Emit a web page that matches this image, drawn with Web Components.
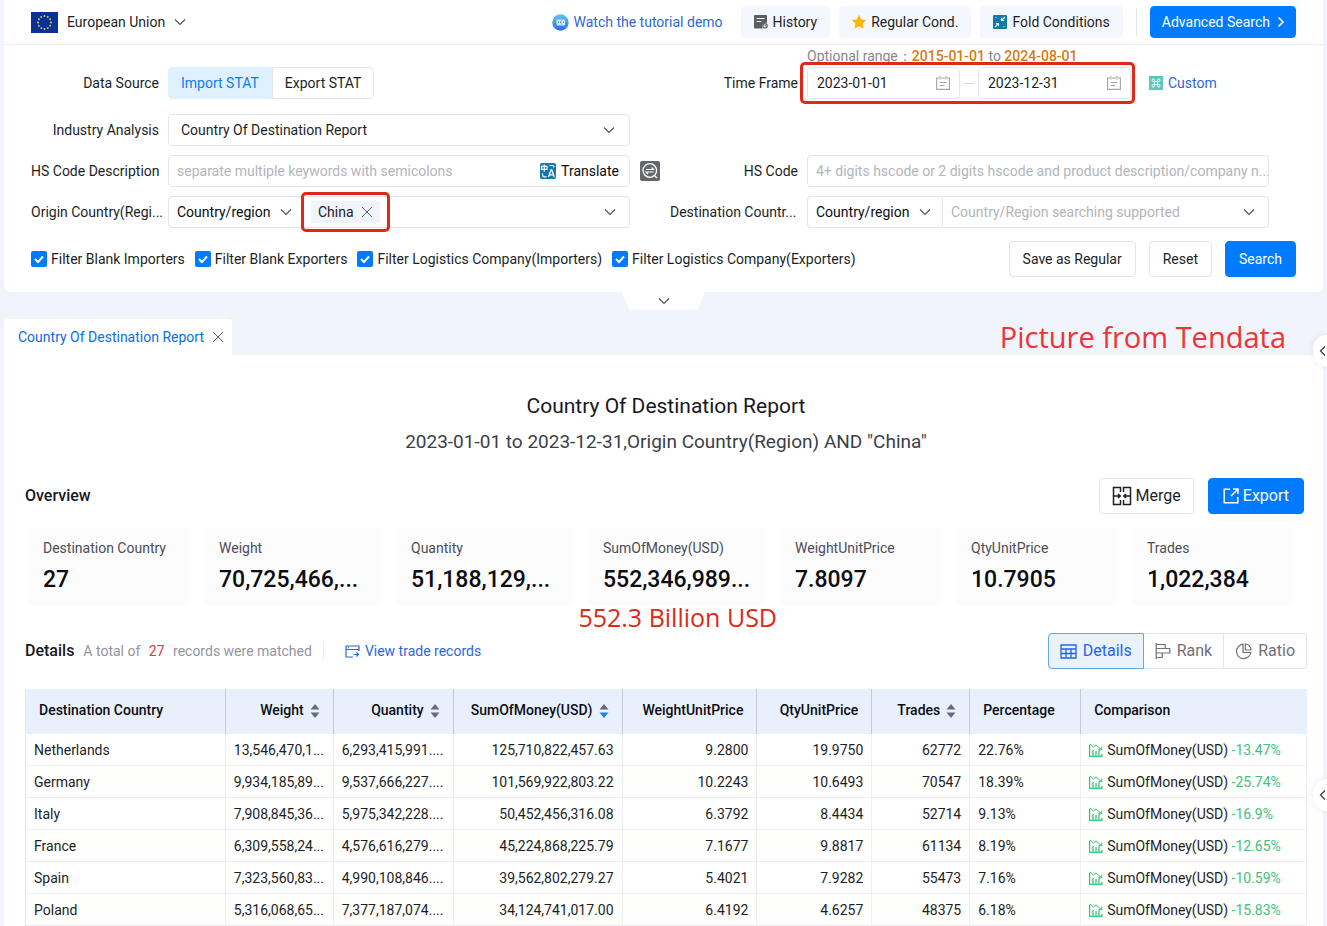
<!DOCTYPE html>
<html lang="en">
<head>
<meta charset="utf-8">
<meta name="viewport" content="width=device-width, initial-scale=1">
<title>Country Of Destination Report</title>
<style>
body{
    margin: 0;
    background-color: #f1f4fb;
    color: #1c1f26;
    font-family: Roboto, "Liberation Sans", sans-serif;
    font-size: 14px;
    line-height: 20px;
    --blue: #007bff;
    --link: #2f67d8;
    --line: #e4e5e8;
    --mark: #dc2a14;
}
</style>
</head>
<body>

<trade-page></trade-page>

<script>
function makeTemplate(html) {
    const template = document.createElement("template");
    template.innerHTML = html;
    return template;
}

class BaseElement extends HTMLElement {
    constructor() {
        super();
        this.attachShadow({mode:"open"});
    }
    show(html) {
        this.shadowRoot.appendChild(makeTemplate(html).content.cloneNode(true));
    }
}

/* icons */
const stars = Array.from({length: 12}, (v, i) => {
    const a = i * Math.PI / 6;
    return `<circle cx="${(13.5 + 6.5 * Math.sin(a)).toFixed(1)}" cy="${(10.5 - 6.5 * Math.cos(a)).toFixed(1)}" r="0.9"/>`;
}).join("");

const icons = {
    flag: [27, 21, `<rect width="27" height="21" fill="#0a3296"/><g fill="#e8d94a">${stars}</g>`],
    down: [12, 12, `<path d="M1 3.5l5 5 5-5" fill="none" stroke="#4d4f55" stroke-width="1.1"/>`],
    left: [8, 12, `<path d="M6 1.5L1.5 6 6 10.5" fill="none" stroke="#3c3e44" stroke-width="1.3"/>`],
    right: [8, 12, `<path d="M1.5 1.5L6 6l-4.500 4.500" fill="none" stroke="#fff" stroke-width="1.600"/>`],
    close: [12, 12, `<path d="M1 1l10 10M11 1L1 11" fill="none" stroke="#5b5e66" stroke-width="1"/>`],
    robot: [17, 17, `<defs><linearGradient id="g" x2="0" y2="1"><stop offset="0" stop-color="#5cc8f6"/><stop offset="1" stop-color="#2b6cf0"/></linearGradient></defs><circle cx="8.5" cy="8.5" r="8.2" fill="url(#g)"/><path d="M4.500 5.500h5v6h-3.500a1.500 1.500 0 0 1-1.500-1.500z" fill="#d5efff"/><path d="M10.200 5.500h1.300a1.500 1.500 0 0 1 1.500 1.500v3a1.500 1.500 0 0 1-1.500 1.500h-1.300z" fill="#fff"/><path d="M6.500 7.500v1.500M8.500 7.500v1.500M11.500 7.500v1.500" stroke="#2f8df0"/>`],
    history: [14, 14, `<path d="M1 0h11a1 1 0 0 1 1 1v7a3.500 3.500 0 0 0-4 5.500H1a1 1 0 0 1-1-1V1a1 1 0 0 1 1-1z" fill="#5c5d62"/><path d="M2.500 3.500h8M2.500 6.500h5" stroke="#fff"/><circle cx="11" cy="10.800" r="2.200" fill="none" stroke="#5c5d62" stroke-width="1.200"/><path d="M11 9.500v1.500h1.300" fill="none" stroke="#5c5d62" stroke-width=".7"/>`],
    star: [14, 14, `<path d="M7 .5l2 4.300 4.700.5-3.500 3.200 1 4.700L7 10.900l-4.200 2.300 1-4.700L.3 5.300l4.700-.5z" fill="#ffb400" stroke="#ffb400" stroke-width=".6" stroke-linejoin="round"/>`],
    fold: [14, 14, `<rect width="14" height="14" rx="1" fill="#117aa8"/><path d="M12 2L8.500 5.500M8.500 2.800v2.700h2.700M2 12l3.500-3.500M2.800 8.500h2.700v2.700" fill="none" stroke="#fff" stroke-width="1.100"/><path d="M2 2.500h2M10 11.500h2" stroke="#6fb6d2"/>`],
    calendar: [14, 14, `<path d="M3 2H.6v11.400h12.800V2H11M5 2h4" fill="none" stroke="#a3a5aa" stroke-width="1.100"/><path d="M4 0v3.500M10 0v3.500M3.500 6.500h7M3.500 9.500h5" stroke="#a3a5aa" stroke-width="1.100"/>`],
    custom: [14, 14, `<rect width="14" height="14" fill="#5fc5bd"/><path d="M5.500 5.500h3v3h-3zM5.500 5.500H4.300A1.300 1.300 0 1 1 5.500 4.200zM8.500 5.500V4.200a1.300 1.300 0 1 1 1.200 1.300zM8.500 8.500h1.200a1.300 1.300 0 1 1-1.200 1.300zM5.500 8.500v1.300a1.300 1.300 0 1 1-1.200-1.300z" fill="none" stroke="#fff" stroke-width=".9"/>`],
    translate: [16, 16, `<rect width="16" height="16" rx="2" fill="#1478b0"/><path d="M1.500 3.300h5.500v3H1.500zM4.200 1.500v7" fill="none" stroke="#fff" stroke-width="1.200"/><path d="M8.500 14l2.500-7h.8l2.500 7M9.500 11.800h4" fill="none" stroke="#fff" stroke-width="1.300"/><path d="M9.500 2.500h2.500a2 2 0 0 1 2 2M2.500 10.500v1.300a2 2 0 0 0 2 2h2" fill="none" stroke="#fff" stroke-width="1.200"/>`],
    lookup: [20, 20, `<rect width="20" height="20" rx="2" fill="#66676c"/><circle cx="9.800" cy="9.500" r="6.800" fill="none" stroke="#fff" stroke-width="1.300"/><path d="M14.500 14.500l2.500 2.500M6 8.500h7.500l-2-2M13.500 11H6l2 2" fill="none" stroke="#fff" stroke-width="1.200"/>`],
    merge: [20, 20, `<path d="M8.500 6V1.500h-7v17h7V14M11.500 6V1.500h7v17h-7V14M1.500 10h7M11.500 10h7M6 8l2.300 2L6 12M14 8l-2.300 2L14 12" fill="none" stroke="#1c1f26" stroke-width="1.500"/>`],
    exporting: [16, 16, `<path d="M7 1.200H1.200v13.600h13.600V9M10 1h5v5M14.800 1.200L8 8" fill="none" stroke="#fff" stroke-width="1.500"/>`],
    records: [15, 13, `<path d="M14 6V1H1v11h7M1 4.500h13M3 2.700h1M8.500 9.500h5M11.500 7.500l2 2-2 2" fill="none" stroke="#2f67d8" stroke-width="1.200"/>`],
    grid: [17, 15, `<path d="M1 1h15v13H1zM1 5h15M1 9.500h15M6 5v9M11 5v9" fill="none" stroke="#2563eb" stroke-width="1.300"/>`],
    rank: [16, 16, `<path d="M1.200 0v16M1.200 1.500h9v4h-9M1.200 5.500h13.600v4.500H1.200M1.200 10h6v4.500h-6" fill="none" stroke="#6f7176" stroke-width="1.200"/>`],
    ratio: [17, 17, `<path d="M8 1.200a7.200 7.200 0 1 0 7.800 8.300H8z" fill="none" stroke="#6f7176" stroke-width="1.200"/><path d="M10.300 1v6h5.700a6 6 0 0 0-5.700-6z" fill="none" stroke="#6f7176" stroke-width="1.200"/>`],
    sort: [10, 14, `<path d="M5 0l4.500 5.500h-9z" fill="#66697a"/><path d="M5 14l4.500-5.500h-9z" fill="var(--down, #66697a)"/>`],
    trend: [14, 14, `<path d="M.6 1.500V13.400h13M4 13V7M7 13V8M10 13V6.500M12.800 11v2" fill="none" stroke="#35c878" stroke-width="1.300"/><path d="M1 1l3.500 3L7 2l5.500 4.500M12.800 3.500v3.200H10" fill="none" stroke="#35c878" stroke-width="1"/>`]
};

class UiIcon extends BaseElement {
    connectedCallback() {
        const [w, h, body] = icons[this.getAttribute("name")];
        this.show(`
<style>
:host{ display: inline-block; flex: none; line-height: 0; }
</style>
<svg width="${w}" height="${h}" viewBox="0 0 ${w} ${h}" aria-hidden="true">${body}</svg>`);
    }
}
customElements.define("ui-icon", UiIcon);

/* button: kind = plain | soft | primary, size = small | large */
class UiButton extends BaseElement {
    connectedCallback() {
        this.show(`
<style>
:host{ display: inline-block; flex: none; }
button{
    display: flex;
    align-items: center;
    gap: 5px;
    height: 36px;
    padding: 0 13px;
    border: 1px solid var(--line);
    border-radius: 4px;
    background-color: #fff;
    color: inherit;
    font: inherit;
    white-space: nowrap;
    cursor: pointer;
}
:host([kind="soft"]) button{ height: 32px; padding: 0 12px; border-color: #f4f7fd; background-color: #f4f7fd; }
:host([kind="primary"]) button{ border-color: var(--blue); background-color: var(--blue); color: #fff; }
:host([size="small"]) button{ height: 32px; gap: 7px; padding: 0 10px 0 11px; }
:host([size="large"]) button{ gap: 4px; padding: 0 12px; font-size: 16px; }
:host([size="large"][kind="primary"]) button{ padding: 0 14px; }
</style>
<button type="button"><slot></slot></button>`);
    }
}
customElements.define("ui-button", UiButton);

/* one label with one control beside it */
const fieldStyle = `
:host{ display: grid; grid-template-columns: 128px minmax(0, 1fr); column-gap: 9px; align-items: center; }
.label{ text-align: right; white-space: nowrap; }
:host([cut]) .label{ text-align: left; }
.box{
    display: flex;
    align-items: center;
    box-sizing: border-box;
    height: 32px;
    border: 1px solid var(--line);
    border-radius: 4px;
    background-color: #fff;
}
input, select{
    flex: 1;
    min-width: 0;
    width: 100%;
    height: 100%;
    box-sizing: border-box;
    padding: 0 0 0 8px;
    border: none;
    outline: none;
    background: none;
    color: inherit;
    font: inherit;
    appearance: none;
}
input::placeholder{ color: #b3b5ba; opacity: 1; }
ui-icon{ pointer-events: none; }
`;

class TextField extends BaseElement {
    connectedCallback() {
        this.show(`
<style>${fieldStyle}
::slotted(*){ margin-right: 10px; }
</style>
<label class="label" for="text">${this.getAttribute("label")}</label>
<div class="box">
    <input id="text" type="text" placeholder="${this.getAttribute("placeholder")}">
    <slot></slot>
</div>`);
    }
}
customElements.define("text-field", TextField);

class SelectField extends BaseElement {
    connectedCallback() {
        this.show(`
<style>${fieldStyle}
select{ padding-left: 12px; }
ui-icon{ margin-right: 14px; }
</style>
<label class="label" for="choice">${this.getAttribute("label")}</label>
<div class="box">
    <select id="choice"><option>${this.getAttribute("value")}</option></select>
    <ui-icon name="down"></ui-icon>
</div>`);
    }
}
customElements.define("select-field", SelectField);

class RegionField extends BaseElement {
    connectedCallback() {
        const chip = this.getAttribute("chip");
        this.show(`
<style>${fieldStyle}
.type{
    display: flex;
    align-items: center;
    width: 135px;
    height: 100%;
    box-sizing: border-box;
    border-right: 1px solid var(--line);
    color: #0b0d12;
}
.type ui-icon{ margin-right: 11px; }
.end{ margin-right: 13px; }
.chip{
    position: relative;
    display: flex;
    align-items: center;
    gap: 7px;
    height: 22px;
    margin-left: 7px;
    padding: 0 7px;
    background-color: #f1f4fa;
}
.chip button{ padding: 0; border: none; background: none; line-height: 0; cursor: pointer; }
/* highlight drawn round the chip */
.chip::after{
    content: "";
    position: absolute;
    inset: -9px -10px;
    border: 3px solid var(--mark);
    border-radius: 5px;
    pointer-events: none;
}
</style>
<label class="label" for="names">${this.getAttribute("label")}</label>
<div class="box">
    <div class="type">
        <select aria-label="Search by"><option>Country/region</option></select>
        <ui-icon name="down"></ui-icon>
    </div>
    ${chip ? `<span class="chip">${chip}<button type="button" aria-label="Remove ${chip}"><ui-icon name="close"></ui-icon></button></span>` : ""}
    <input id="names" type="text" placeholder="${this.getAttribute("placeholder") || ""}">
    <ui-icon class="end" name="down"></ui-icon>
</div>`);
    }
}
customElements.define("region-field", RegionField);

class SourceField extends BaseElement {
    connectedCallback() {
        this.show(`
<style>${fieldStyle}
.group{ display: flex; }
button{
    height: 32px;
    padding: 0 12px;
    border: 1px solid var(--line);
    border-radius: 0 4px 4px 0;
    background-color: #fff;
    color: inherit;
    font: inherit;
}
.on{ border-color: #dff0fe; border-radius: 4px 0 0 4px; background-color: #dff0fe; color: #0d7df2; }
</style>
<span class="label" id="name">Data Source</span>
<div class="group" role="group" aria-labelledby="name">
    <button class="on" type="button">Import STAT</button><button type="button">Export STAT</button>
</div>`);
    }
}
customElements.define("source-field", SourceField);

class TimeField extends BaseElement {
    connectedCallback() {
        this.show(`
<style>${fieldStyle}
.row{ display: flex; align-items: center; gap: 18px; }
.dates{ position: relative; display: flex; align-items: center; gap: 4px; }
.box{ width: 153px; position: relative; }
.box input{ padding-left: 9px; }
.box ui-icon{ margin-right: 9px; }
.dash{ position: relative; width: 10px; height: 1px; background-color: #d5d7db; }
.range{
    position: absolute;
    left: 0;
    bottom: 33px;
    color: #85878c;
    white-space: nowrap;
}
.range b{ color: #d97a12; font-weight: 500; }
/* highlight drawn round both dates */
.mark{
    position: absolute;
    inset: -5px -4px -5px -7px;
    border: 3px solid var(--mark);
    border-radius: 5px;
    background-color: #fff;
}
a{ display: flex; align-items: center; gap: 5px; color: var(--link); text-decoration: none; }
</style>
<label class="label" for="from">Time Frame</label>
<div class="row">
    <div class="dates">
        <span class="range">Optional range：<b>2015-01-01</b> to <b>2024-08-01</b></span>
        <span class="mark"></span>
        <div class="box"><input id="from" type="text" value="2023-01-01"><ui-icon name="calendar"></ui-icon></div>
        <span class="dash"></span>
        <div class="box"><input aria-label="Time Frame end" type="text" value="2023-12-31"><ui-icon name="calendar"></ui-icon></div>
    </div>
    <a href="#"><ui-icon name="custom"></ui-icon>Custom</a>
</div>`);
    }
}
customElements.define("time-field", TimeField);

class CheckField extends BaseElement {
    connectedCallback() {
        this.show(`
<style>
:host{ display: block; }
label{ display: flex; align-items: center; gap: 4px; white-space: nowrap; }
input{
    appearance: none;
    width: 16px;
    height: 16px;
    margin: 0;
    border-radius: 2px;
    background: var(--blue) url("data:image/svg+xml,%3Csvg xmlns='http://www.w3.org/2000/svg' viewBox='0 0 16 16'%3E%3Cpath d='M4 8l3 3 5-5.500' fill='none' stroke='white' stroke-width='2'/%3E%3C/svg%3E");
}
</style>
<label><input type="checkbox" checked><slot></slot></label>`);
    }
}
customElements.define("check-field", CheckField);

class TopBar extends BaseElement {
    connectedCallback() {
        this.show(`
<style>
:host{
    display: flex;
    align-items: center;
    gap: 9px;
    height: 44px;
    padding: 0 27px;
    border-bottom: 1px solid #eff0f3;
}
.region{
    display: flex;
    align-items: center;
    gap: 9px;
    margin-right: auto;
    padding: 0;
    border: none;
    background: none;
    color: inherit;
    font: inherit;
}
a{ display: flex; align-items: center; gap: 5px; margin-right: 9px; color: var(--link); text-decoration: none; }
.rule{ width: 1px; height: 28px; margin: 0 4px; background-color: #e2e4e9; }
</style>
<button class="region" type="button"><ui-icon name="flag"></ui-icon>European Union<ui-icon name="down"></ui-icon></button>
<a href="#"><ui-icon name="robot"></ui-icon>Watch the tutorial demo</a>
<ui-button kind="soft"><ui-icon name="history"></ui-icon>History</ui-button>
<ui-button kind="soft"><ui-icon name="star"></ui-icon>Regular Cond.</ui-button>
<ui-button kind="soft"><ui-icon name="fold"></ui-icon>Fold Conditions</ui-button>
<span class="rule"></span>
<ui-button kind="primary" size="small">Advanced Search<ui-icon name="right"></ui-icon></ui-button>`);
    }
}
customElements.define("top-bar", TopBar);

class SearchPanel extends BaseElement {
    connectedCallback() {
        this.show(`
<style>
:host{ display: block; border-radius: 0 0 6px 6px; background-color: #fff; }
.form{
    display: grid;
    grid-template-columns: minmax(0, 1fr) 20px minmax(0, 1fr);
    gap: 9px 10px;
    align-items: center;
    padding: 22px 54px 0 27px;
}
source-field, time-field{ margin-bottom: 6px; }
.left{ grid-column: 1; }
.right{ grid-column: 3; }
.lookup, .translate{ padding: 0; border: none; background: none; color: inherit; font: inherit; line-height: 0; }
.translate{ display: flex; align-items: center; gap: 5px; color: #0b0d12; }
.actions{ display: flex; align-items: center; justify-content: space-between; padding: 13px 27px 15px; }
.checks{ display: flex; gap: 10px; }
.buttons{ display: flex; gap: 13px; }
</style>
<top-bar></top-bar>
<form>
    <div class="form">
        <source-field class="left"></source-field>
        <time-field class="right"></time-field>
        <select-field class="left" label="Industry Analysis" value="Country Of Destination Report"></select-field>
        <text-field class="left" label="HS Code Description" placeholder="separate multiple keywords with semicolons">
            <button class="translate" type="button"><ui-icon name="translate"></ui-icon>Translate</button>
        </text-field>
        <button class="lookup" type="button" aria-label="Look up code"><ui-icon name="lookup"></ui-icon></button>
        <text-field class="right" label="HS Code" placeholder="4+ digits hscode or 2 digits hscode and product description/company n..."></text-field>
        <region-field class="left" cut label="Origin Country(Regi..." chip="China"></region-field>
        <region-field class="right" cut label="Destination Countr..." placeholder="Country/Region searching supported"></region-field>
    </div>
    <div class="actions">
        <div class="checks">
            <check-field>Filter Blank Importers</check-field>
            <check-field>Filter Blank Exporters</check-field>
            <check-field>Filter Logistics Company(Importers)</check-field>
            <check-field>Filter Logistics Company(Exporters)</check-field>
        </div>
        <div class="buttons">
            <ui-button>Save as Regular</ui-button>
            <ui-button>Reset</ui-button>
            <ui-button kind="primary">Search</ui-button>
        </div>
    </div>
</form>`);
    }
}
customElements.define("search-panel", SearchPanel);

class StatCard extends BaseElement {
    connectedCallback() {
        const note = this.getAttribute("note");
        this.show(`
<style>
:host{ display: block; position: relative; padding: 10px 0 12px 15px; background-color: #fcfcfd; white-space: nowrap; }
.name{ color: #4b4e55; }
.value{ margin-top: 8px; color: #0b0d12; font-size: 23px; font-weight: 500; line-height: 28px; }
/* remark hanging under the card */
.note{
    position: absolute;
    top: 100%;
    right: -12px;
    color: var(--mark);
    font-family: "Open Sans", "Noto Sans", sans-serif;
    font-size: 25px;
    line-height: 22px;
}
</style>
<div class="name">${this.getAttribute("name")}</div>
<div class="value">${this.getAttribute("value")}</div>
${note ? `<div class="note">${note}</div>` : ""}`);
    }
}
customElements.define("stat-card", StatCard);

class ViewTabs extends BaseElement {
    connectedCallback() {
        this.show(`
<style>
:host{ display: flex; }
button{
    display: flex;
    align-items: center;
    gap: 6px;
    height: 36px;
    padding: 0 11px;
    border: 1px solid var(--line);
    border-left: none;
    background-color: #fff;
    color: #6f7176;
    font: inherit;
    font-size: 16px;
}
.on{ border: 1px solid #5ea9ea; border-radius: 4px 0 0 4px; background-color: #e9f2fd; color: #2563eb; }
button:last-child{ border-radius: 0 4px 4px 0; }
</style>
<button class="on" type="button"><ui-icon name="grid"></ui-icon>Details</button>
<button type="button"><ui-icon name="rank"></ui-icon>Rank</button>
<button type="button"><ui-icon name="ratio"></ui-icon>Ratio</button>`);
    }
}
customElements.define("view-tabs", ViewTabs);

const columns = [
    {name: "Destination Country", width: 200},
    {name: "Weight", width: 108, right: true, sort: "both", cut: true},
    {name: "Quantity", width: 120, right: true, sort: "both", cut: true},
    {name: "SumOfMoney(USD)", width: 169, right: true, sort: "down"},
    {name: "WeightUnitPrice", width: 135, right: true},
    {name: "QtyUnitPrice", width: 115, right: true},
    {name: "Trades", width: 98, right: true, sort: "both"},
    {name: "Percentage", width: 111},
    {name: "Comparison", width: 226}
];

const rows = [
    ["Netherlands", "13,546,470,1...", "6,293,415,991....", "125,710,822,457.63", "9.2800", "19.9750", "62772", "22.76%", "-13.47%"],
    ["Germany", "9,934,185,89...", "9,537,666,227....", "101,569,922,803.22", "10.2243", "10.6493", "70547", "18.39%", "-25.74%"],
    ["Italy", "7,908,845,36...", "5,975,342,228....", "50,452,456,316.08", "6.3792", "8.4434", "52714", "9.13%", "-16.9%"],
    ["France", "6,309,558,24...", "4,576,616,279....", "45,224,868,225.79", "7.1677", "9.8817", "61134", "8.19%", "-12.65%"],
    ["Spain", "7,323,560,83...", "4,990,108,846....", "39,562,802,279.27", "5.4021", "7.9282", "55473", "7.16%", "-10.59%"],
    ["Poland", "5,316,068,65...", "7,377,187,074....", "34,124,741,017.00", "6.4192", "4.6257", "48375", "6.18%", "-15.83%"]
];

class DataTable extends BaseElement {
    connectedCallback() {
        const total = columns.reduce((sum, c) => sum + c.width, 0);
        const cols = columns.map(c => `<col style="width: ${c.width / total * 100}%">`).join("");
        const head = columns.map(c => `<th class="${c.right ? "right" : ""}" scope="col">${c.name}${c.sort ? `<ui-icon class="${c.sort}" name="sort"></ui-icon>` : ""}</th>`).join("");
        const body = rows.map(row => `<tr>${row.map((text, i) => {
            if (i === 8) {
                return `<td><span class="compare"><ui-icon name="trend"></ui-icon><span>SumOfMoney(USD) <i>${text}</i></span></span></td>`;
            }
            return `<td class="${columns[i].right && !columns[i].cut ? "right" : ""}">${text}</td>`;
        }).join("")}</tr>`).join("");
        this.show(`
<style>
:host{ display: block; }
table{
    width: 100%;
    table-layout: fixed;
    border-collapse: separate;
    border-spacing: 0;
    border-left: 1px solid #e6e8ec;
}
th, td{ box-sizing: border-box; border-right: 1px solid #eeeff1; text-align: left; white-space: nowrap; }
th{ height: 45px; padding: 0 13px 3px; border-right-color: #c3cad9; background-color: #e8f0fe; color: #0b0d12; font-weight: 500; }
th:last-child{ border-right-color: #e8f0fe; }
td{ height: 32px; padding: 0 8px; border-bottom: 1px solid #eeeff1; }
tr:nth-child(even) td{ background-color: #fefefc; }
.right{ text-align: right; }
th ui-icon{ margin-left: 6px; vertical-align: middle; }
.down{ --down: #1684fc; }
.compare{ display: flex; align-items: center; gap: 4px; }
i{ color: #45c07c; font-style: normal; }
</style>
<table>
    <colgroup>${cols}</colgroup>
    <thead><tr>${head}</tr></thead>
    <tbody>${body}</tbody>
</table>`);
    }
}
customElements.define("data-table", DataTable);

class ReportPanel extends BaseElement {
    connectedCallback() {
        this.show(`
<style>
:host{ display: block; padding: 37px 16px 0 21px; background-color: #fff; }
h1, h2, p{ margin: 0; font-weight: 400; }
h1{ font-size: 21px; line-height: 28px; text-align: center; color: #16181d; }
.query{ margin-top: 10px; font-size: 19px; line-height: 24px; text-align: center; color: #3c3f46; }
.bar{ display: flex; align-items: center; }
.overview{ gap: 14px; margin-top: 24px; padding-right: 3px; }
h2{ font-size: 16px; font-weight: 500; color: #16181d; }
.overview h2{ margin-right: auto; }
.stats{
    display: grid;
    grid-template-columns: 161fr 177fr 177fr 177fr 161fr 161fr 161fr;
    gap: 15px;
    margin-top: 14px;
    padding: 0 14px 0 3px;
}
.details{ gap: 9px; margin: 27px 0 20px; }
.details p{ color: #92959c; }
.details b{ margin: 0 5px; color: #dc3a45; font-weight: 400; }
.rule{ width: 1px; height: 18px; margin: 0 12px 0 2px; background-color: #eceef1; }
a{ display: flex; align-items: center; gap: 5px; color: var(--link); text-decoration: none; }
view-tabs{ margin-left: auto; }
</style>
<h1>Country Of Destination Report</h1>
<p class="query">2023-01-01 to 2023-12-31,Origin Country(Region) AND "China"</p>
<div class="bar overview">
    <h2>Overview</h2>
    <ui-button size="large"><ui-icon name="merge"></ui-icon>Merge</ui-button>
    <ui-button kind="primary" size="large"><ui-icon name="exporting"></ui-icon>Export</ui-button>
</div>
<div class="stats">
    <stat-card name="Destination Country" value="27"></stat-card>
    <stat-card name="Weight" value="70,725,466,..."></stat-card>
    <stat-card name="Quantity" value="51,188,129,..."></stat-card>
    <stat-card name="SumOfMoney(USD)" value="552,346,989..." note="552.3 Billion USD"></stat-card>
    <stat-card name="WeightUnitPrice" value="7.8097"></stat-card>
    <stat-card name="QtyUnitPrice" value="10.7905"></stat-card>
    <stat-card name="Trades" value="1,022,384"></stat-card>
</div>
<div class="bar details">
    <h2>Details</h2>
    <p>A total of <b>27</b> records were matched</p>
    <span class="rule"></span>
    <a href="#"><ui-icon name="records"></ui-icon>View trade records</a>
    <view-tabs></view-tabs>
</div>
<data-table></data-table>`);
    }
}
customElements.define("report-panel", ReportPanel);

class SideHandle extends BaseElement {
    connectedCallback() {
        this.show(`
<style>
:host{ display: block; position: absolute; right: 0; }
button{
    display: flex;
    align-items: center;
    justify-content: flex-end;
    width: 14px;
    height: 32px;
    padding: 0;
    border: none;
    border-radius: 16px 0 0 16px;
    background-color: #fff;
    box-shadow: 0 0 6px rgba(60, 80, 120, .12);
}
</style>
<button type="button" aria-label="Open side panel"><ui-icon name="left"></ui-icon></button>`);
    }
}
customElements.define("side-handle", SideHandle);

class TradePage extends BaseElement {
    connectedCallback() {
        this.show(`
<style>
:host{ display: block; position: relative; padding: 0 4px; overflow: hidden; }
.between{
    display: grid;
    grid-template-columns: 1fr 84px 1fr;
    height: 63px;
}
.tab{
    display: flex;
    align-items: center;
    align-self: end;
    justify-self: start;
    gap: 8px;
    height: 36px;
    padding: 0 8px 0 14px;
    border-radius: 4px 4px 0 0;
    background-color: #fff;
    color: #0b6fdc;
}
.tab button{ padding: 0; border: none; background: none; line-height: 0; }
.fold{
    height: 18px;
    padding: 0;
    border: none;
    background-color: #fff;
    clip-path: polygon(0 0, 100% 0, 90% 100%, 10% 100%);
    line-height: 0;
}
.credit{
    align-self: end;
    justify-self: end;
    padding-right: 37px;
    color: #ee3436;
    font-family: "Open Sans", "Noto Sans", sans-serif;
    font-size: 29px;
    line-height: 36px;
    white-space: nowrap;
}
.first{ top: 335px; }
.second{ top: 779px; }
</style>
<search-panel></search-panel>
<div class="between">
    <div class="tab">Country Of Destination Report<button type="button" aria-label="Close tab"><ui-icon name="close"></ui-icon></button></div>
    <button class="fold" type="button" aria-label="Fold search"><ui-icon name="down"></ui-icon></button>
    <div class="credit">Picture from Tendata</div>
</div>
<report-panel></report-panel>
<side-handle class="first"></side-handle>
<side-handle class="second"></side-handle>`);
    }
}
customElements.define("trade-page", TradePage);
</script>

</body>
</html>
